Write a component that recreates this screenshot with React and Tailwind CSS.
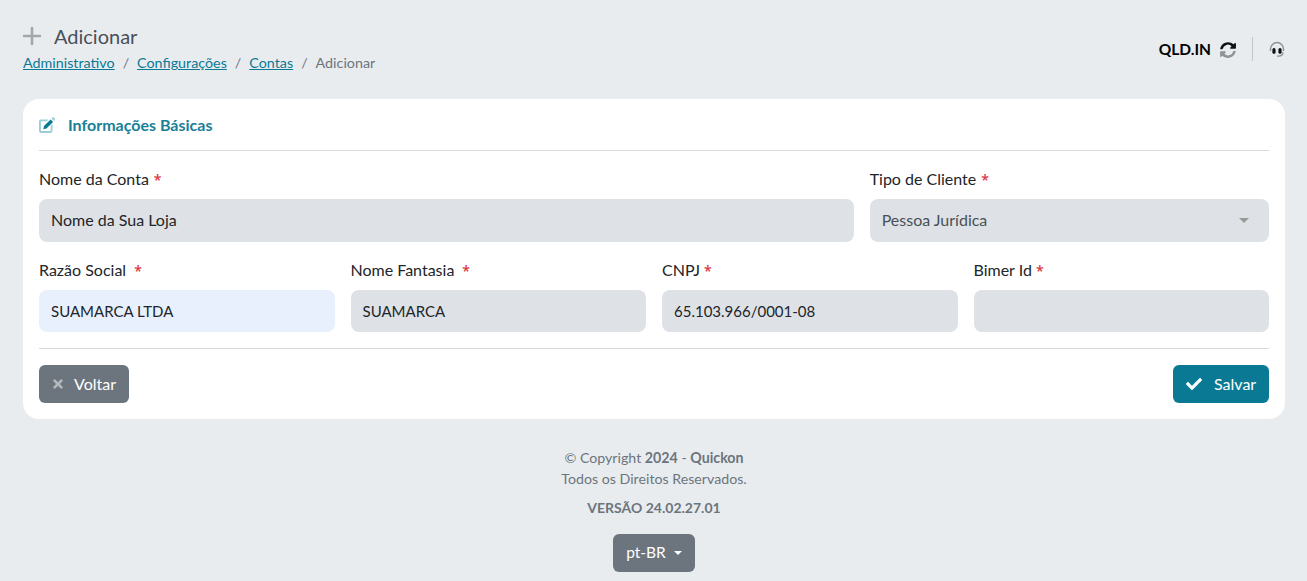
import React from "react";
import { FaCheck, FaTimes } from "react-icons/fa";

const Req = () => <span className="font-['Open_Sans'] text-[14px] font-semibold text-[#dc3545]">*</span>;

function Field({ label, gap, value, height = "h-[42px]", bg = "bg-[#dee2e6]", color = "text-[#212529]", size = "text-[16px]", className = "" }) {
  return (
    <div className={className}>
      <div className="flex h-[24px] items-center text-[16px] text-[#212529]">
        <span>{label}</span>
        <span className={gap}><Req /></span>
      </div>
      <div className={`mt-[8px] flex ${height} items-center rounded-lg px-3 ${size} ${bg} ${color}`}>{value}</div>
    </div>
  );
}

function PlusIcon() {
  return (
    <svg width="18" height="18" viewBox="0 0 18 18" className="shrink-0">
      <path d="M9 1v16M1 9h16" fill="none" stroke="#a3a6aa" strokeWidth="2.6" strokeLinecap="round" />
    </svg>
  );
}

function SyncIcon() {
  return (
    <svg width="16" height="16" viewBox="0 0 512 512" className="shrink-0">
      <path fill="#111" d="M370 133A168 168 0 0 0 88 218c-1 6-6 10-12 10H19c-8 0-14-7-12-15C29 94 133 4 256 4c68 0 130 27 176 70l37-37c15-15 41-4 41 17v138c0 13-11 24-24 24H348c-21 0-32-26-17-41z" />
      <path fill="#8f9296" d="M142 379a168 168 0 0 0 282-85c1-6 6-10 12-10h57c8 0 14 7 12 15-22 119-126 209-249 209-68 0-130-27-176-70l-37 37c-15 15-41 4-41-17V320c0-13 11-24 24-24h138c21 0 32 26 17 41z" />
    </svg>
  );
}

function HeadsetIcon() {
  return (
    <svg width="16" height="18" viewBox="0 0 17 18" className="shrink-0">
      <path d="M1.6 10V8a6.9 6.9 0 0 1 13.8 0v2" fill="none" stroke="#8f9296" strokeWidth="1.6" />
      <path d="M14.8 11.5c0 2.6-1.8 4-4.3 4H8.5" fill="none" stroke="#8f9296" strokeWidth="1.5" />
      <rect x="3.6" y="7" width="3.4" height="6" rx="1.7" fill="#111" />
      <rect x="10" y="7" width="3.4" height="6" rx="1.7" fill="#111" />
    </svg>
  );
}

function EditIcon() {
  return (
    <svg width="16" height="16" viewBox="0 0 16 16" className="shrink-0">
      <path d="M2 2.5h7.5l-1.8 1.8H2.8a.9.9 0 0 0-.9.9v8a.9.9 0 0 0 .9.9h8a.9.9 0 0 0 .9-.9V8.6l1.8-1.8V14a2 2 0 0 1-2 2H2a2 2 0 0 1-2-2V4.5a2 2 0 0 1 2-2z" fill="#9ccdd8" />
      <path d="M11.6 2.4l2.5 2.5-6.6 6.6-3.2.7.7-3.2z" fill="#0a7a94" />
      <path d="M12.5 1.5l.9-.9c.4-.4 1-.4 1.4 0l1.1 1.1c.4.4.4 1 0 1.4l-.9.9z" fill="#9ccdd8" />
    </svg>
  );
}

export default function App() {
  return (
    <div className="min-h-[581px] overflow-hidden bg-[#e9ecef] pl-[23px] pr-[22px] font-['Lato','Noto_Sans',sans-serif] text-[16px]">
      <header className="flex h-[99px] items-start justify-between">
        <div className="pt-[22px]">
          <div className="flex h-[28px] items-center">
            <PlusIcon />
            <span className="ml-[13px] text-[20px] text-[#495057]">Adicionar</span>
          </div>
          <nav className="mt-[3px] flex h-[20px] items-center text-[14.3px] text-[#6c757d]">
            <a className="text-[#0a7a94] underline">Administrativo</a>
            <span className="mx-[8px]">/</span>
            <a className="text-[#0a7a94] underline">Configurações</a>
            <span className="mx-[8px]">/</span>
            <a className="text-[#0a7a94] underline">Contas</a>
            <span className="mx-[8px]">/</span>
            <span>Adicionar</span>
          </nav>
        </div>
        <div className="flex h-[24px] translate-y-[37px] items-center">
          <span className="translate-y-px text-[15.5px] font-bold text-black">QLD.IN</span>
          <span className="ml-[9px] translate-y-px"><SyncIcon /></span>
          <span className="ml-[16px] h-[24px] w-px bg-[#c4c7ca]" />
          <span className="ml-[16px] translate-y-px"><HeadsetIcon /></span>
        </div>
      </header>

      <main className="h-[320px] rounded-2xl bg-white px-4">
        <div className="flex h-[52px] items-center border-b border-[#d9d9d9]">
          <EditIcon />
          <h2 className="ml-[13px] text-[16px] font-bold text-[#1a7f96]">Informações Básicas</h2>
        </div>
        <div className="mt-[16px] grid grid-cols-12 gap-x-4">
          <Field className="col-span-8" label="Nome da Conta" gap="ml-[5px]" value={<span className="-translate-y-px">Nome da Sua Loja</span>} height="h-[43px]" />
          <Field
            className="col-span-4"
            label="Tipo de Cliente"
            gap="ml-[5px]"
            height="h-[43px]"
            color="text-[#495057]"
            value={
              <div className="flex w-full items-center justify-between">
                <span className="-translate-y-px">Pessoa Jurídica</span>
                <span className="mr-[8px] h-0 w-0 border-x-[5px] border-t-[5px] border-x-transparent border-t-[#999]" />
              </div>
            }
          />
        </div>
        <div className="mt-[16px] grid grid-cols-4 gap-x-4">
          <Field label="Razão Social" gap="ml-[8px]" value="SUAMARCA LTDA" bg="bg-[#e8f0fe]" size="text-[15px]" />
          <Field label="Nome Fantasia" gap="ml-[8px]" value="SUAMARCA" size="text-[15px]" />
          <Field label="CNPJ" gap="ml-[4px]" value="65.103.966/0001-08" size="text-[15px]" />
          <Field label="Bimer Id" gap="ml-[4px]" value="" />
        </div>
        <div className="mt-[16px] flex items-center justify-between border-t border-[#d9d9d9] pt-[16px]">
          <button className="flex h-[38px] w-[90px] items-center rounded-md bg-[#6c757d] pl-[12px] text-white">
            <FaTimes className="h-[14px] w-[14px] text-[#b5b9bd]" />
            <span className="ml-[9px]">Voltar</span>
          </button>
          <button className="flex h-[38px] w-[96px] items-center rounded-md bg-[#0a7a94] pl-[13px] text-white">
            <FaCheck className="h-[16px] w-[16px]" />
            <span className="ml-[12px]">Salvar</span>
          </button>
        </div>
      </main>

      <footer className="flex flex-col items-center pt-[28px] text-[14.2px] text-[#6c757d]">
        <div className="h-[21px] leading-[21px]">© Copyright <b>2024</b> - <b>Quickon</b></div>
        <div className="h-[21px] leading-[21px]">Todos os Direitos Reservados.</div>
        <div className="mt-[8px] h-[21px] text-[14px] font-bold leading-[21px]">VERSÃO 24.02.27.01</div>
        <button className="mt-[16px] flex h-[38px] w-[82px] items-center justify-center rounded-md bg-[#6c757d] text-[15.5px] text-white">
          pt-BR
          <span className="ml-[8px] h-0 w-0 border-x-[4px] border-t-[4px] border-x-transparent border-t-white" />
        </button>
      </footer>
    </div>
  );
}
